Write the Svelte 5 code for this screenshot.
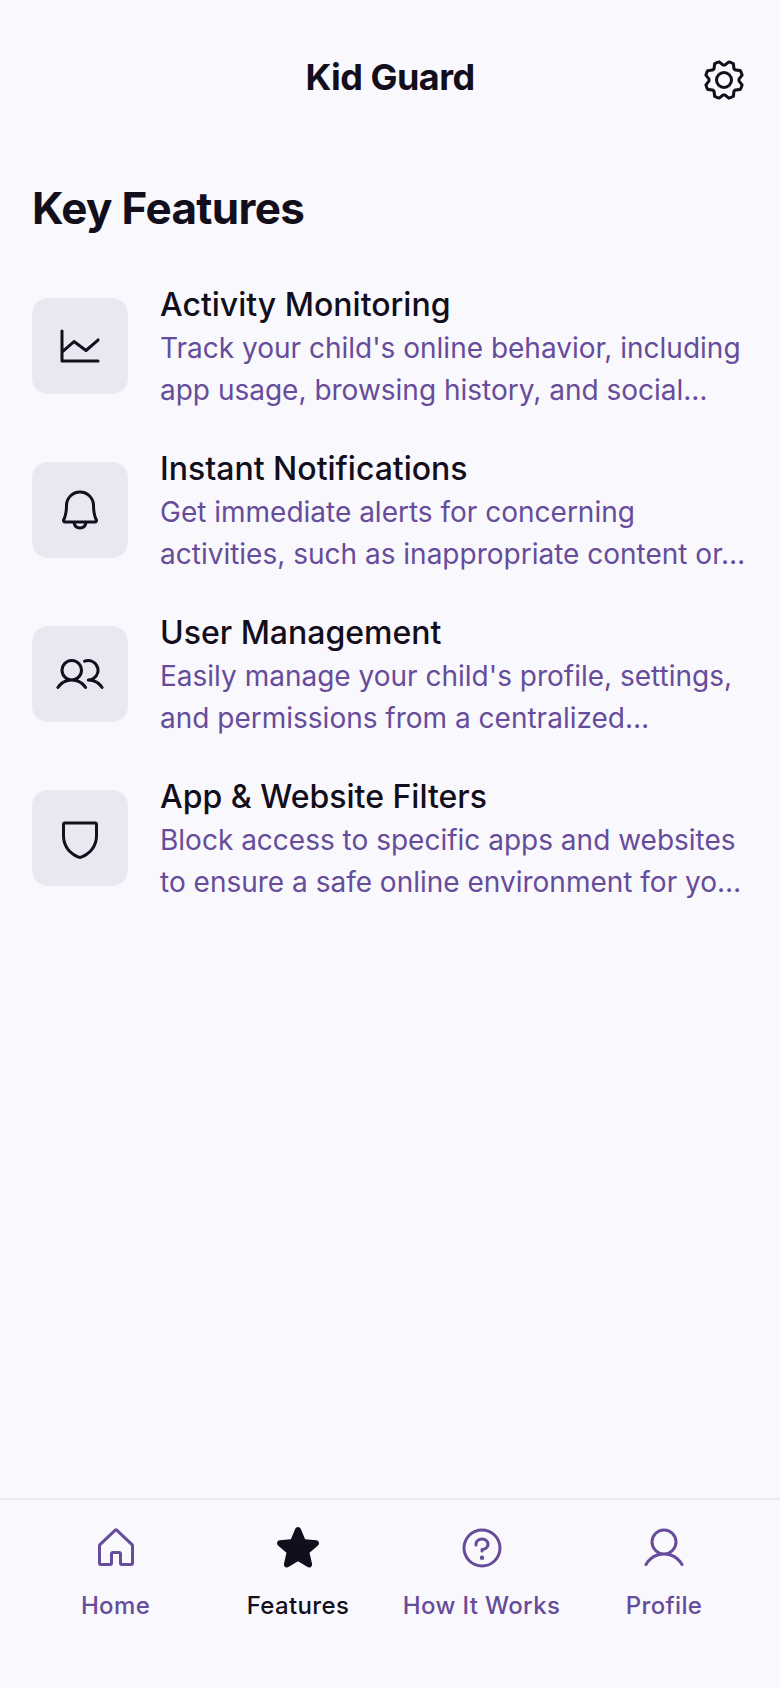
<script>
  const icons = {
    gear: 'M128,80a48,48,0,1,0,48,48A48.05,48.05,0,0,0,128,80Zm0,80a32,32,0,1,1,32-32A32,32,0,0,1,128,160Zm88-29.84q.06-2.16,0-4.32l14.92-18.64a8,8,0,0,0,1.48-7.06,107.21,107.21,0,0,0-10.88-26.25,8,8,0,0,0-6-3.93l-23.72-2.64q-1.48-1.56-3-3L186,40.54a8,8,0,0,0-3.94-6,107.71,107.71,0,0,0-26.25-10.87,8,8,0,0,0-7.06,1.49L130.16,40Q128,40,125.84,40L107.2,25.11a8,8,0,0,0-7.06-1.48A107.6,107.6,0,0,0,73.89,34.51a8,8,0,0,0-3.93,6L67.32,64.27q-1.56,1.49-3,3L40.54,70a8,8,0,0,0-6,3.94,107.71,107.71,0,0,0-10.87,26.25,8,8,0,0,0,1.49,7.06L40,125.84Q40,128,40,130.16L25.11,148.8a8,8,0,0,0-1.48,7.06,107.21,107.21,0,0,0,10.88,26.25,8,8,0,0,0,6,3.93l23.72,2.64q1.49,1.56,3,3L70,215.46a8,8,0,0,0,3.94,6,107.71,107.71,0,0,0,26.25,10.87,8,8,0,0,0,7.06-1.49L125.84,216q2.16.06,4.32,0l18.64,14.92a8,8,0,0,0,7.06,1.48,107.21,107.21,0,0,0,26.25-10.88,8,8,0,0,0,3.93-6l2.64-23.72q1.56-1.48,3-3L215.46,186a8,8,0,0,0,6-3.94,107.71,107.71,0,0,0,10.87-26.25,8,8,0,0,0-1.49-7.06Zm-16.1-6.5a73.93,73.93,0,0,1,0,8.68,8,8,0,0,0,1.74,5.48l14.19,17.73a91.57,91.57,0,0,1-6.23,15L187,173.11a8,8,0,0,0-5.1,2.64,74.11,74.11,0,0,1-6.14,6.14,8,8,0,0,0-2.64,5.1l-2.51,22.58a91.32,91.32,0,0,1-15,6.23l-17.74-14.19a8,8,0,0,0-5-1.75h-.48a73.93,73.93,0,0,1-8.68,0,8,8,0,0,0-5.48,1.74L100.45,215.8a91.57,91.57,0,0,1-15-6.23L82.89,187a8,8,0,0,0-2.64-5.1,74.11,74.11,0,0,1-6.14-6.14,8,8,0,0,0-5.1-2.64L46.43,170.6a91.32,91.32,0,0,1-6.23-15l14.19-17.74a8,8,0,0,0,1.74-5.48,73.93,73.93,0,0,1,0-8.68,8,8,0,0,0-1.74-5.48L40.2,100.45a91.57,91.57,0,0,1,6.23-15L69,82.89a8,8,0,0,0,5.1-2.64,74.11,74.11,0,0,1,6.14-6.14A8,8,0,0,0,82.89,69L85.4,46.43a91.32,91.32,0,0,1,15-6.23l17.74,14.19a8,8,0,0,0,5.48,1.74,73.93,73.93,0,0,1,8.68,0,8,8,0,0,0,5.48-1.74L155.55,40.2a91.57,91.57,0,0,1,15,6.23L173.11,69a8,8,0,0,0,2.64,5.1,74.11,74.11,0,0,1,6.14,6.14,8,8,0,0,0,5.1,2.64l22.58,2.51a91.32,91.32,0,0,1,6.23,15l-14.19,17.74A8,8,0,0,0,199.87,123.66Z',
    chart: 'M232,208a8,8,0,0,1-8,8H32a8,8,0,0,1-8-8V48a8,8,0,0,1,16,0v94.37L90.73,98a8,8,0,0,1,10.07-.38l58.81,44.11L218.73,90a8,8,0,1,1,10.54,12l-64,56a8,8,0,0,1-10.07.38L96.39,114.29,40,163.63V200H224A8,8,0,0,1,232,208Z',
    bell: 'M221.8,175.94C216.25,166.38,208,139.33,208,104a80,80,0,1,0-160,0c0,35.34-8.26,62.38-13.81,71.94A16,16,0,0,0,48,200H88.81a40,40,0,0,0,78.38,0H208a16,16,0,0,0,13.8-24.06ZM128,216a24,24,0,0,1-22.62-16h45.24A24,24,0,0,1,128,216ZM48,184c7.7-13.24,16-43.92,16-80a64,64,0,1,1,128,0c0,36.05,8.28,66.73,16,80Z',
    users: 'M117.25,157.92a60,60,0,1,0-66.5,0A95.83,95.83,0,0,0,3.53,195.63a8,8,0,1,0,13.4,8.74,80,80,0,0,1,134.14,0,8,8,0,0,0,13.4-8.74A95.83,95.83,0,0,0,117.25,157.92ZM40,108a44,44,0,1,1,44,44A44.05,44.05,0,0,1,40,108Zm210.14,98.7a8,8,0,0,1-11.07-2.33A79.83,79.83,0,0,0,172,168a8,8,0,0,1,0-16,44,44,0,1,0-16.34-84.87,8,8,0,1,1-5.94-14.85,60,60,0,0,1,55.53,105.64,95.83,95.83,0,0,1,47.22,37.71A8,8,0,0,1,250.14,206.7Z',
    shield: 'M208,40H48A16,16,0,0,0,32,56v58.78c0,89.61,75.82,119.34,91,124.39a15.53,15.53,0,0,0,10,0c15.2-5.05,91-34.78,91-124.39V56A16,16,0,0,0,208,40Zm0,74.79c0,78.42-66.35,104.62-80,109.18-13.53-4.51-80-30.69-80-109.18V56H208Z',
    house: 'M218.83,103.77l-80-75.48a1.14,1.14,0,0,1-.11-.11,16,16,0,0,0-21.53,0l-.11.11L37.17,103.77A16,16,0,0,0,32,115.55V208a16,16,0,0,0,16,16H96a16,16,0,0,0,16-16V160h32v48a16,16,0,0,0,16,16h48a16,16,0,0,0,16-16V115.55A16,16,0,0,0,218.83,103.77ZM208,208H160V160a16,16,0,0,0-16-16H112a16,16,0,0,0-16,16v48H48V115.55l.11-.1L128,40l79.9,75.43.11.1Z',
    star: 'M234.5,114.38l-45.1,39.36,13.51,58.6a16,16,0,0,1-23.84,17.34l-51.11-31-51,31a16,16,0,0,1-23.84-17.34L66.61,153.8,21.5,114.38a16,16,0,0,1,9.11-28.06l59.46-5.15,23.21-55.36a15.95,15.95,0,0,1,29.44,0h0L166,81.17l59.44,5.15a16,16,0,0,1,9.11,28.06Z',
    question: 'M140,180a12,12,0,1,1-12-12A12,12,0,0,1,140,180ZM128,72c-22.06,0-40,16.15-40,36v4a8,8,0,0,0,16,0v-4c0-11,10.77-20,24-20s24,9,24,20-10.77,20-24,20a8,8,0,0,0-8,8v8a8,8,0,0,0,16,0v-.72c18.24-3.35,32-17.9,32-35.28C168,88.15,150.06,72,128,72Zm104,56A104,104,0,1,1,128,24,104.11,104.11,0,0,1,232,128Zm-16,0a88,88,0,1,0-88,88A88.1,88.1,0,0,0,216,128Z',
    user: 'M230.92,212c-15.23-26.33-38.7-45.21-66.09-54.16a72,72,0,1,0-73.66,0C63.78,166.78,40.31,185.66,25.08,212a8,8,0,1,0,13.85,8c18.84-32.56,52.14-52,89.07-52s70.23,19.44,89.07,52a8,8,0,1,0,13.85-8ZM72,96a56,56,0,1,1,56,56A56.06,56.06,0,0,1,72,96Z'
  };

  const features = [
    { icon: 'chart', title: 'Activity Monitoring', text: "Track your child's online behavior, including app usage, browsing history, and social…" },
    { icon: 'bell', title: 'Instant Notifications', text: 'Get immediate alerts for concerning activities, such as inappropriate content or…' },
    { icon: 'users', title: 'User Management', text: "Easily manage your child's profile, settings, and permissions from a centralized…" },
    { icon: 'shield', title: 'App & Website Filters', text: 'Block access to specific apps and websites to ensure a safe online environment for yo…' }
  ];

  const tabs = [
    { icon: 'house', label: 'Home' },
    { icon: 'star', label: 'Features', active: true },
    { icon: 'question', label: 'How It Works' },
    { icon: 'user', label: 'Profile' }
  ];
</script>

{#snippet glyph(name)}
  <svg class="icon" viewBox="0 0 256 256" fill="currentColor" aria-hidden="true"><path d={icons[name]} /></svg>
{/snippet}

<div class="screen">
  <header>
    <h1>Kid Guard</h1>
    <button>{@render glyph('gear')}</button>
  </header>

  <main>
    <h2>Key Features</h2>
    <ul>
      {#each features as f}
        <li>
          <div class="tile">{@render glyph(f.icon)}</div>
          <div class="copy">
            <h3>{f.title}</h3>
            <p>{f.text}</p>
          </div>
        </li>
      {/each}
    </ul>
  </main>

  <nav>
    {#each tabs as t}
      <div class="tab" class:active={t.active}>
        <div class="slot">{@render glyph(t.icon)}</div>
        <span>{t.label}</span>
      </div>
    {/each}
  </nav>
</div>

<style>
  :global(body) { margin: 0; background: #f9f8fc; }
  .screen {
    box-sizing: border-box;
    width: 100%;
    height: 100vh;
    display: flex;
    flex-direction: column;
    background: #f9f8fc;
    color: #120e1b;
    font-family: Inter, sans-serif;
  }
  h1, h2, h3, p, ul { margin: 0; padding: 0; }
  ul { list-style: none; }
  .icon { display: block; width: 48px; height: 48px; }
  header { display: flex; align-items: center; padding: 32px 32px 16px; }
  h1 {
    flex: 1;
    padding: 0 0 6px 96px;
    text-align: center;
    font-size: 36px;
    line-height: 45px;
    font-weight: 700;
    letter-spacing: -0.015em;
  }
  button {
    display: flex;
    align-items: center;
    justify-content: flex-end;
    width: 96px;
    height: 96px;
    padding: 0;
    border: 0;
    background: none;
    color: inherit;
  }
  main { flex: 1; }
  h2 {
    padding: 36px 32px 28px;
    font-size: 44px;
    line-height: 56px;
    font-weight: 700;
    letter-spacing: -0.015em;
  }
  li { display: flex; align-items: center; gap: 32px; padding: 16px 32px; }
  .tile {
    display: flex;
    align-items: center;
    justify-content: center;
    flex: none;
    width: 96px;
    height: 96px;
    border-radius: 16px;
    background: #eae7f3;
  }
  .copy { flex: 1; min-width: 0; padding: 2px 0 1px; }
  h3 { font-size: 32px; line-height: 45px; font-weight: 500; }
  p { font-size: 28px; line-height: 42px; color: #664c9a; }
  nav {
    display: grid;
    grid-template-columns: repeat(4, minmax(0, 1fr));
    column-gap: 16px;
    padding: 16px 32px 64px;
    border-top: 2px solid #eae7f3;
  }
  .tab {
    box-sizing: border-box;
    min-width: 0;
    display: flex;
    flex-direction: column;
    align-items: center;
    gap: 8px;
    color: #664c9a;
  }
  .tab:nth-child(even) { padding-right: 1px; }
  .tab.active { color: #120e1b; }
  .slot { display: flex; align-items: center; height: 64px; }
  span {
    font-size: 24px;
    line-height: 36px;
    font-weight: 500;
    letter-spacing: 0.015em;
    white-space: nowrap;
  }
</style>
